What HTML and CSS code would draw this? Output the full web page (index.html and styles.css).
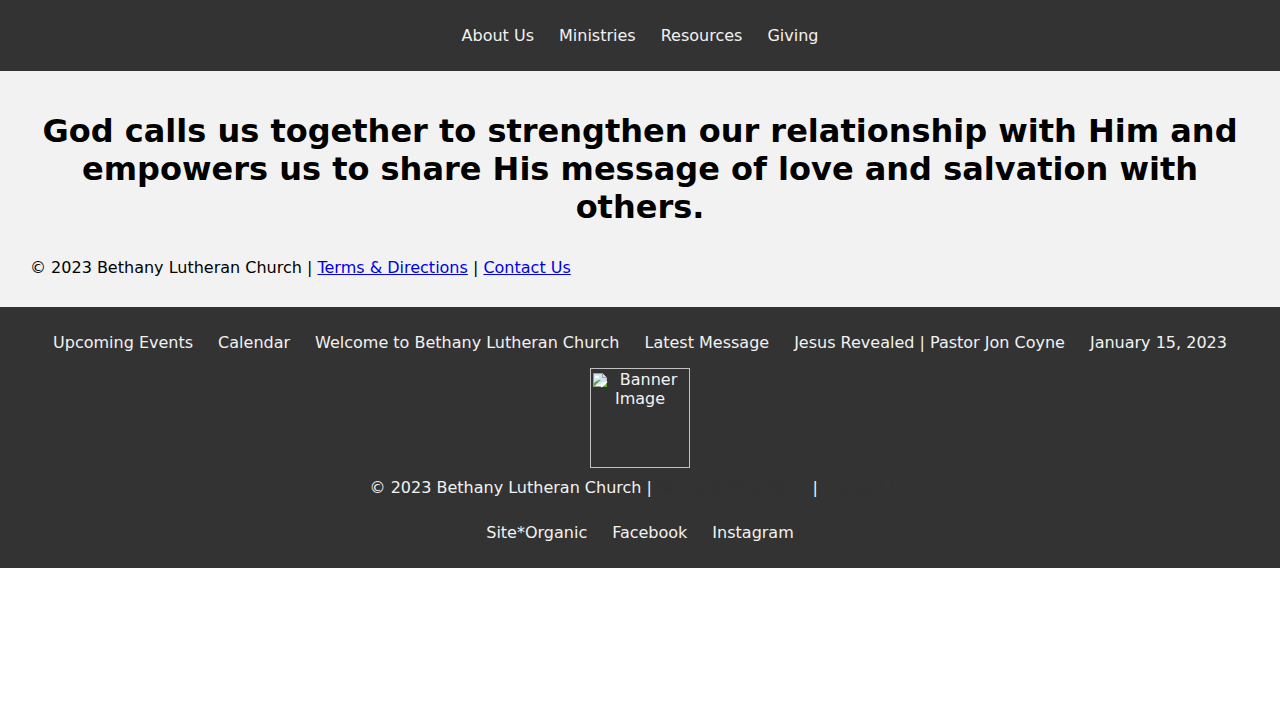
FILE: index.html
```html
<!DOCTYPE html>
<html lang="en">
<head>
<meta charset="utf-8">
<title>Bethany Lutheran Church</title>
<link rel="stylesheet" href="styles.css">
</head>
<body>
<header class="site-header">
  <nav class="main-nav">
    <a href="#">About Us</a>
    <a href="#">Ministries</a>
    <a href="#">Resources</a>
    <a href="#">Giving</a>
  </nav>
</header>
<main class="hero">
  <h1 class="hero-title">God calls us together to strengthen our relationship with Him and empowers us to share His message of love and salvation with others.</h1>
  <p class="hero-copy">© 2023 Bethany Lutheran Church | <a href="#">Terms &amp; Directions</a> | <a href="#">Contact Us</a></p>
</main>
<footer class="site-footer">
  <nav class="footer-nav">
    <a href="#">Upcoming Events</a>
    <a href="#">Calendar</a>
    <a href="#">Welcome to Bethany Lutheran Church</a>
    <a href="#">Latest Message</a>
    <a href="#">Jesus Revealed | Pastor Jon Coyne</a>
    <a href="#">January 15, 2023</a>
  </nav>
  <div class="banner">
    <svg class="broken-icon" width="16" height="16" viewBox="0 0 16 16" aria-hidden="true">
      <path d="M1.5 1.5h9l4 4v9h-13z" fill="#f4f4f4" stroke="#9a9a9a"/>
      <path d="M2 2h8.5v4H14.5v3L2 14z" fill="#cfe2f5"/>
      <ellipse cx="5" cy="5" rx="2.3" ry="1.2" fill="#ffffff"/>
      <path d="M2 14.5V11c2-2 4-3 7-3.2L2 14.5z" fill="#5aa832"/>
      <path d="M10.5 1.5v4h4" fill="#e6e6e6" stroke="#9a9a9a"/>
      <path d="M15 9.5L9 15" stroke="#ffffff" stroke-width="1.5"/>
      <path d="M15 11L11 15h4z" fill="#5aa832"/>
    </svg>
    <span class="banner-alt">Banner Image</span>
  </div>
  <p class="footer-copy">© 2023 Bethany Lutheran Church | <a href="#">Terms &amp; Directions</a> | <a href="#">Contact Us</a></p>
  <nav class="social-nav">
    <a href="#">Site*Organic</a>
    <a href="#">Facebook</a>
    <a href="#">Instagram</a>
  </nav>
</footer>
</body>
</html>
```

FILE: styles.css
```css
html, body {
  margin: 0;
  padding: 0;
  background: #ffffff;
}

body {
  font-family: "DejaVu Sans", "Liberation Sans", sans-serif;
  font-size: 16px;
  color: #000000;
}

.site-header {
  background: #333333;
  padding: 26px 0;
}

.main-nav,
.footer-nav,
.social-nav {
  display: flex;
  justify-content: center;
  gap: 25px;
}

.main-nav a,
.footer-nav a,
.social-nav a {
  color: #f2f2f2;
  text-decoration: none;
  white-space: nowrap;
}

.hero {
  background: #f2f2f2;
  padding: 20px 30px;
}

.hero-title {
  margin: 21px 0 0;
  font-size: 32px;
  font-weight: bold;
  text-align: center;
}

.hero-copy {
  margin: 32px 0 10px;
}

.hero-copy a {
  color: #0000ee;
}

.site-footer {
  background: #333333;
  color: #f2f2f2;
  padding: 26px 20px 26px;
  display: flex;
  flex-direction: column;
  align-items: center;
}

.banner {
  margin-top: 16px;
  width: 100px;
  height: 100px;
  box-sizing: border-box;
  border: 1px solid #c0c0c0;
  text-align: center;
  padding-top: 1px;
  overflow: hidden;
}

.broken-icon {
  float: left;
  margin: 2px 0 0 1px;
}

.banner-alt {
  color: #f2f2f2;
}

.footer-copy {
  margin: 10px 0 0;
}

.footer-copy a {
  color: #323232;
  text-decoration: none;
}

.social-nav {
  margin-top: 26px;
}
```
